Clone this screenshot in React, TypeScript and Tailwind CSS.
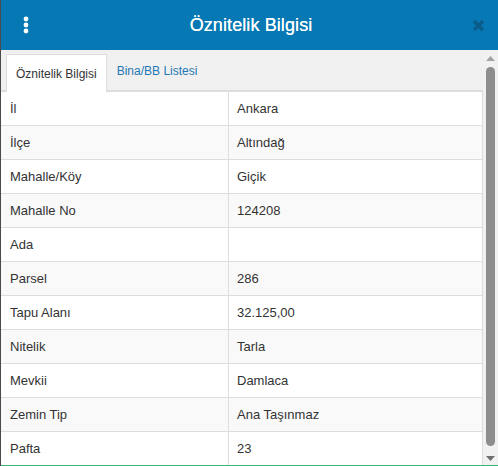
const rows: [string, string][] = [
  ['İl', 'Ankara'],
  ['İlçe', 'Altındağ'],
  ['Mahalle/Köy', 'Giçik'],
  ['Mahalle No', '124208'],
  ['Ada', ''],
  ['Parsel', '286'],
  ['Tapu Alanı', '32.125,00'],
  ['Nitelik', 'Tarla'],
  ['Mevkii', 'Damlaca'],
  ['Zemin Tip', 'Ana Taşınmaz'],
  ['Pafta', '23'],
];

export default function App() {
  return (
    <div className="w-[498px] h-[466px] overflow-hidden flex flex-col bg-white border-l border-[#4a4a4a] font-['Liberation_Sans',Arial,sans-serif] text-[#333]">
      <div className="h-[50px] shrink-0 bg-[#0679b5] flex items-center justify-between px-[20px]">
        <svg width="8" height="18" viewBox="0 0 8 18" className="ml-[1px]">
          <circle cx="4" cy="3" r="2.4" fill="#fff" />
          <circle cx="4" cy="9" r="2.4" fill="#fff" />
          <circle cx="4" cy="15" r="2.4" fill="#fff" />
        </svg>
        <h1 className="text-[18px] text-white font-medium tracking-[0.1px] [text-shadow:0_0_0.4px_#fff]">Öznitelik Bilgisi</h1>
        <svg width="13" height="13" viewBox="0 0 13 13" className="mr-[-7px]">
          <path d="M2 2 L11 11 M11 2 L2 11" stroke="#0b5c8a" strokeWidth="3.2" strokeLinecap="butt" />
        </svg>
      </div>
      <div className="flex flex-1 min-h-0">
        <div className="flex-1 flex flex-col min-w-0">
          <div className="h-[42px] shrink-0 bg-[#f0f0f0] flex items-end pl-[5px] border-b-2 border-[#ddd]">
            <div className="h-[38px] px-[9px] bg-white border border-b-0 border-[#ddd] flex items-center text-[12px] text-[#333] mb-[-2px]">
              Öznitelik Bilgisi
            </div>
            <div className="h-[38px] px-[10px] flex items-center text-[12px] text-[#1f78b4]">
              Bina/BB Listesi
            </div>
          </div>
          <div className="border-r border-[#ddd]">
            {rows.map(([k, v], i) => (
              <div
                key={k}
                className={`grid grid-cols-[228px_1fr] h-[34px] border-b border-[#ddd] text-[13px] ${i % 2 === 1 ? 'bg-[#f9f9f9]' : 'bg-white'}`}
              >
                <div className="px-[9px] flex items-center border-r border-[#ddd]">{k}</div>
                <div className="px-[8px] flex items-center">{v}</div>
              </div>
            ))}
          </div>
        </div>
        <div className="w-[15px] shrink-0 bg-[#f1f1f1] flex flex-col items-center pt-[6px] pb-[4px]">
          <svg width="9" height="5" viewBox="0 0 9 5">
            <path d="M0 5 L4.5 0 L9 5 Z" fill="#a3a3a3" />
          </svg>
          <div className="w-[9px] flex-1 mt-[6px] mb-[10px] rounded-[5px] bg-[#8d8d8d]" />
          <svg width="9" height="5" viewBox="0 0 9 5">
            <path d="M0 0 L9 0 L4.5 5 Z" fill="#6e6e6e" />
          </svg>
        </div>
      </div>
      <div className="h-px shrink-0 bg-[#3cb371]" />
    </div>
  );
}
